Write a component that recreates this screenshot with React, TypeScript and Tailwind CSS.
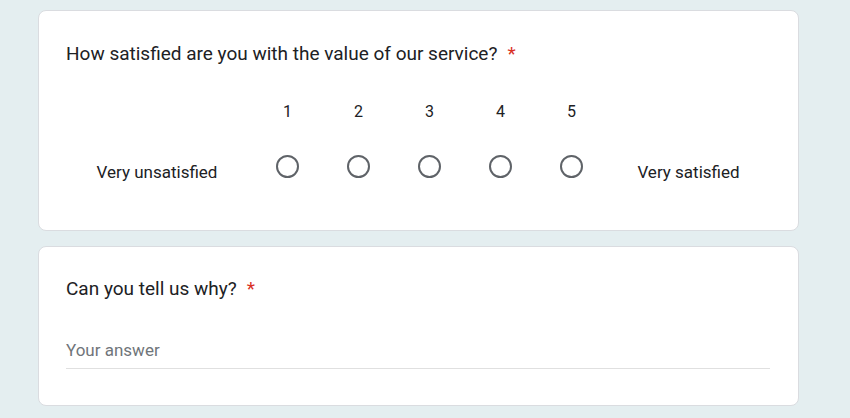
const font = { fontFamily: "Roboto, Arial, sans-serif" }

function Required() {
  return <span className="ml-[10px] text-[#d93025]">*</span>
}

export default function App() {
  const points = [1, 2, 3, 4, 5]

  return (
    <div className="w-[850px] h-[418px] bg-[#e4eef0] pt-[10px] pl-[38px] overflow-hidden" style={font}>
      {/* Linear scale question */}
      <div className="w-[761px] h-[221px] bg-white border border-[#dadce0] rounded-lg px-[27px] pt-[31px]">
        <div className="text-[19px] leading-6 text-[#202124]">
          How satisfied are you with the value of our service?
          <Required />
        </div>

        <div className="flex mt-[34px]">
          <div className="w-[182px] pt-[60px] text-center text-[17px] leading-6 text-[#202124]">Very unsatisfied</div>
          <div className="flex ml-[4px]">
            {points.map(p => (
              <div key={p} className="w-[71px] flex flex-col items-center">
                <span className="text-[16px] leading-6 text-[#202124]">{p}</span>
                <div className="h-12 mt-[18px] flex items-center justify-center">
                  <div className="w-[23px] h-[23px] rounded-full border-2 border-[#5f6368]" />
                </div>
              </div>
            ))}
          </div>
          <div className="w-[163px] pt-[60px] text-center text-[17px] leading-6 text-[#202124]">Very satisfied</div>
        </div>
      </div>

      {/* Short answer question */}
      <div className="w-[761px] h-[160px] mt-[15px] bg-white border border-[#dadce0] rounded-lg px-[27px] pt-[30px]">
        <div className="text-[19px] leading-6 text-[#202124]">
          Can you tell us why?
          <Required />
        </div>
        <div className="mt-[37px] border-b border-[#e0e0e0] pb-[5px] w-[704px]">
          <span className="text-[17px] leading-6 text-[#70757a]">Your answer</span>
        </div>
      </div>
    </div>
  )
}
